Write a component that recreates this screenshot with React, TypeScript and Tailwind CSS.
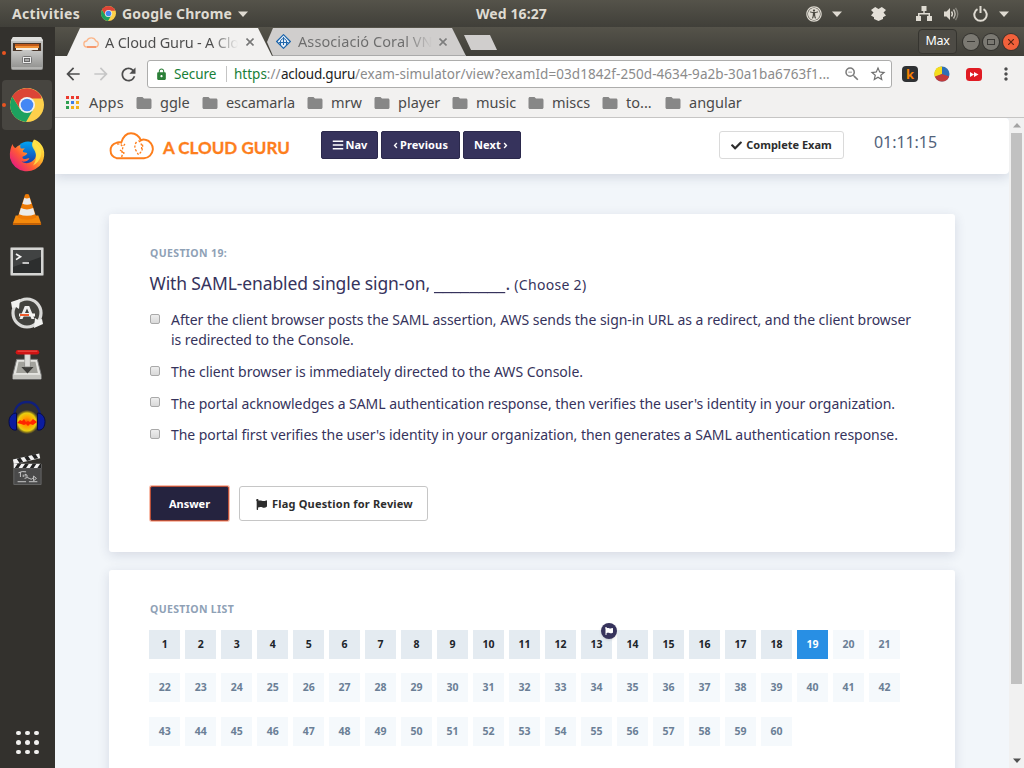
import type { ReactNode } from "react";
import { MdArrowBack, MdArrowForward, MdRefresh, MdLock, MdStarBorder, MdMoreVert, MdFolder, MdZoomOut } from "react-icons/md";
import { FaUniversalAccess, FaBars, FaCheck, FaFlag, FaAngleLeft, FaAngleRight } from "react-icons/fa";

const FONT = "font-['Noto_Sans','Open_Sans',sans-serif]";

function Caret() {
  return (
    <svg width="10" height="6" viewBox="0 0 10 6">
      <path d="M0 .5h10L5 6z" fill="#dfdbd2" />
    </svg>
  );
}

function ChromeLogo({ size }: { size: number }) {
  return (
    <svg width={size} height={size} viewBox="0 0 34 34">
      <circle cx="17" cy="17" r="17" fill="#fdd04b" />
      <path d="M17 17 2.3 8.5A17 17 0 0 1 31.7 9H17z" fill="#dd4b3e" />
      <path d="M2.3 8.5A17 17 0 0 0 16 34l7.5-13L17 17l-7 4z" fill="#1da15f" />
      <path d="M2.3 8.5A17 17 0 0 1 31.9 10.500H17a8 8 0 0 0-7.2 10z" fill="#dc4437" />
      <circle cx="17" cy="17" r="8" fill="#f1f1f1" />
      <circle cx="17" cy="17" r="6.3" fill="#4487f4" />
    </svg>
  );
}

function FilesIcon() {
  return (
    <svg width="34" height="34" viewBox="0 0 34 34">
      <defs>
        <linearGradient id="cab" x1="0" y1="0" x2="0" y2="1">
          <stop offset="0" stopColor="#c9c9c7" />
          <stop offset="1" stopColor="#929290" />
        </linearGradient>
      </defs>
      <path d="M3 1h28l2 3v28a2 2 0 0 1-2 2H3a2 2 0 0 1-2-2V4z" fill="url(#cab)" />
      <path d="M3 1h28l2 4H1z" fill="#dededc" />
      <path d="M3 7h28v8H3z" fill="#493528" />
      <path d="M5 8h24v2H5z" fill="#c15a19" />
      <path d="M5 10h24v2H5z" fill="#ef9137" />
      <path d="M6 12h22v2H6z" fill="#f6efe3" />
      <path d="M2 15h9l2-1h8l2 1h9v17H2z" fill="url(#cab)" />
      <path d="M2 31.500h30v1H2z" fill="#d0d0ce" />
      <rect x="12.5" y="20.500" width="9" height="7" rx="1" fill="#eee" stroke="#777" />
      <rect x="14.500" y="22.500" width="5" height="3" fill="#aaa" stroke="#666" />
    </svg>
  );
}

function FirefoxIcon() {
  return (
    <svg width="36" height="36" viewBox="0 0 36 36">
      <defs>
        <linearGradient id="ffo" x1="1" y1=".1" x2=".1" y2=".9">
          <stop offset="0" stopColor="#fff44f" />
          <stop offset=".35" stopColor="#ffb629" />
          <stop offset=".65" stopColor="#ff5a36" />
          <stop offset="1" stopColor="#e31587" />
        </linearGradient>
        <linearGradient id="ffb" x1="0" y1="0" x2="0" y2="1">
          <stop offset="0" stopColor="#00a3f4" />
          <stop offset="1" stopColor="#1a2f9e" />
        </linearGradient>
      </defs>
      <circle cx="19" cy="15" r="12.500" fill="url(#ffb)" />
      <path d="M3.500 5c.5 2 1.500 3.500 3 4 1.500-1.500 3-2.700 5-3-.5 1.500-.3 2.600.5 3.500 1.200-.2 2.600 0 4 .1-1.400 1-2.400 2-2.100 3.100.8 1 2.900.9 4.400 1.300-.2 2-2.800 2.600-4.800 3.700-.3 1.500.6 2 1.500 2.300 2 .5 3.500-1.500 5.500-.5-2 3-5 3.500-8 3 5 3.500 11 1 13.500-3 1.500-3 1.500-7-1-10.500-2-3-1.500-6 .5-8.500 4 1.400 7.500 5 9 9.500 1.300 4 .8 9-1 13A17.500 17.500 0 0 1 1 19C.5 13 1.500 9 3.500 5z" fill="url(#ffo)" />
      <path d="M25 .5c1 3.500 4 5 6 8 3 5 1 14-7 18 3-4 4-9 2-14-2-4-5-6-1-12z" fill="#ffe54a" opacity=".85" />
    </svg>
  );
}

function VlcIcon() {
  return (
    <svg width="32" height="36" viewBox="0 0 34 36">
      <path d="M5 25h24l3 8.500H2z" fill="#f58a0c" />
      <path d="M2 33h30v2H2z" fill="#c96305" />
      <path d="M15 2.500q2-1 4 0L27 27q-10 5-20 0z" fill="#ee7b06" />
      <path d="m14.200 6-2 6.500q5 2 9.600 0L19.800 6q-3 1.500-5.600 0zM10.500 17l-2 6.500q8.500 3.500 17 0l-2-6.500q-6.500 3-13 0z" fill="#ebebeb" />
    </svg>
  );
}

function TerminalIcon() {
  return (
    <svg className="mt-0.5" width="34" height="30" viewBox="0 0 34 30">
      <rect x=".5" y=".5" width="33" height="28" rx="1" fill="#d5d5d3" stroke="#8d8d8a" />
      <rect x="3" y="3" width="28" height="23" fill="#2c2e2e" />
      <path d="M3 3h28v7L3 20z" fill="#414343" />
      <path d="m6 7 4.500 2.800L6 12.600M12.500 16H19" fill="none" stroke="#f4f4f4" strokeWidth="1.700" />
    </svg>
  );
}

function UpdaterIcon() {
  return (
    <svg width="34" height="34" viewBox="0 0 34 34">
      <circle cx="17" cy="17" r="14" fill="#42423e" stroke="#d9d9d7" strokeWidth="3.200" />
      <path d="M1 6l9-3-1 10-3-2-4 1zM33 28l-9 4 1-10 3 2 4-1z" fill="#f1f1ef" />
      <path d="M14.800 10h4.400L24.500 23h-3l-1.500-3.500h-6L12.500 23h-3zM17 12.500l-2 4.500h4z" fill="#eee" />
      <path d="M9 17.500h16v3H9z" fill="#f4f4f2" />
      <path d="M10 18h9v2h-9z" fill="#ee5b2c" />
    </svg>
  );
}

function TransmissionIcon() {
  return (
    <svg width="32" height="34" viewBox="0 0 34 36">
      <path d="M6 12h22l4 16v5H2v-5z" fill="#e3e3df" stroke="#777" />
      <path d="M8 14.500h18l2.500 12h-23z" fill="#a2a29c" />
      <path d="M2 28.500h30V33H2z" fill="#c3c3be" />
      <path d="M11 20h3.500v-4h6v4H24l-6.500 7z" fill="#3e3e3b" />
      <path d="M14.500 6h6v14h-6z" fill="#dcdcd9" stroke="#8c8c88" strokeWidth=".6" />
      <rect x="5" y="2" width="25" height="4.800" rx="2.400" fill="#cf1414" />
      <path d="M7 3.300h21" stroke="#f05a50" />
    </svg>
  );
}

function AudacityIcon() {
  return (
    <svg width="38" height="36" viewBox="0 0 38 36">
      <defs>
        <radialGradient id="aud">
          <stop offset="0" stopColor="#ff5a00" />
          <stop offset=".4" stopColor="#ffa200" />
          <stop offset=".75" stopColor="#e8cf10" />
          <stop offset="1" stopColor="#a98b10" stopOpacity=".1" />
        </radialGradient>
      </defs>
      <path d="M6 18C6 8 12 3 19 3s13 5 13 15" fill="none" stroke="#101f7c" strokeWidth="2.400" />
      <ellipse cx="19" cy="23" rx="12" ry="12" fill="url(#aud)" />
      <path d="M9 24l3-3 2 1 2-2 2 3 2-1 2 1 3-3 4 3-4 3-3-1-2 2-2-2-2 1-3-1z" fill="#ff2600" />
      <path d="M8.500 14v17C3 32 1 27 1 22.500S4 14 8.500 14zM29.500 14v17c5.500 1 7.500-4 7.500-8.500S34 14 29.500 14z" fill="#0b1c9e" stroke="#060b45" />
    </svg>
  );
}

function ClapperIcon() {
  return (
    <svg width="32" height="36" viewBox="0 0 34 36">
      <path d="m2 8 28-6.500 1 5L3 13z" fill="#f2f2f2" />
      <path d="m6 7 4-1 3 4.500-4 1zM14 5l4-1 3 4.500-4 1zM22 3l4-1 3 4.500-4 1z" fill="#222" />
      <path d="M3 13h29v21.500H3z" fill="#4a4a4a" stroke="#666" />
      <path d="M3 12.500h29v4.500H3z" fill="#f2f2f2" />
      <path d="M4 17l3-4.500h4L8 17zM12 17l3-4.500h4L16 17zM20 17l3-4.500h4L24 17zM28 17l3-4.500h1V17z" fill="#222" />
      <path d="M8 22q4-2 8-1M10 21.500v5M13 24v2.500M15 26v-2.500l2 1v2M14.500 28q3-2 5 0t4-.5M24 25.500v5l3-2.500zM7 31.500h9M19 31.500h9" fill="none" stroke="#ddd" strokeWidth=".9" />
    </svg>
  );
}

const dockItems: { icon: ReactNode; active?: boolean; running?: boolean }[] = [
  { icon: <FilesIcon />, running: true },
  { icon: <ChromeLogo size={34} />, active: true, running: true },
  { icon: <FirefoxIcon /> },
  { icon: <VlcIcon /> },
  { icon: <TerminalIcon /> },
  { icon: <UpdaterIcon /> },
  { icon: <TransmissionIcon /> },
  { icon: <AudacityIcon /> },
  { icon: <ClapperIcon /> },
];

function TopBar() {
  return (
    <header className="flex h-[27px] shrink-0 items-center bg-gradient-to-b from-[#55534a] to-[#403f39] text-sm font-bold text-[#dfdbd2]">
      <div className="w-[89px] pl-3 tracking-[0.3px]">Activities</div>
      <div className="flex w-[387px] items-center pl-[12px]">
        <ChromeLogo size={15} />
        <span className="ml-1.5 mr-[6px] tracking-[0.2px]">Google Chrome</span>
        <Caret />
      </div>
      <div className="grow tracking-[0.1px]">Wed 16:27</div>
      <div className="flex items-center pr-[15px]">
        <FaUniversalAccess size={16} />
        <span className="ml-2.5 mr-[29px]"><Caret /></span>
        <svg width="15" height="14" viewBox="0 0 15 14" fill="#e4e0d8">
          <path d="M4.200 0 7.500 2 10.800 0 15 3l-2.500 2.600L15 8.500l-3 1.800V12L7.500 14 3 12v-1.700L0 8.500l2.500-2.900L0 3z" />
        </svg>
        <svg className="ml-[30px]" width="16" height="15" viewBox="0 0 16 15" fill="#dfdbd2">
          <path d="M5.500 0h5v5H8.700v2H14v3h2v5h-5v-5h1.500V8.500h-9V10H5v5H0v-5h2V7h5.300V5H5.500z" />
        </svg>
        <svg className="ml-[12px]" width="15" height="14" viewBox="0 0 15 14" fill="none" stroke="#dfdbd2">
          <path d="M0 4.500h2.500L6 1v12L2.500 9.500H0z" fill="#dfdbd2" stroke="none" />
          <path d="M7.500 4.500q1.800 2.500 0 5" strokeWidth="1.400" />
          <path d="M9.500 2.500q3.200 4.500 0 9" strokeWidth="1.400" opacity=".8" />
          <path d="M11.500.8q4.400 6 0 12.400" strokeWidth="1.400" opacity=".4" />
        </svg>
        <svg className="ml-3.5" width="15" height="16" viewBox="0 0 15 16" fill="none" stroke="#dfdbd2" strokeWidth="2">
          <path d="M4.500 3.200a6.200 6.200 0 1 0 6 0M7.500 0v7" />
        </svg>
        <span className="-mr-[0px] ml-[11px]"><Caret /></span>
      </div>
    </header>
  );
}

function Dock() {
  return (
    <nav className="flex w-[55px] shrink-0 flex-col bg-[#33312d]">
      {dockItems.map((d, i) => (
        <div key={i} className="relative flex h-[52px] w-full items-center justify-center pr-px">
          <div className={d.active ? "flex h-[50px] w-[50px] items-center justify-center rounded bg-[#474540]" : "flex h-[50px] w-[50px] items-center justify-center"}>
            {d.icon}
          </div>
          {d.running && <span className="absolute left-0.5 top-6 size-1 rounded-full bg-[#e95420]" />}
        </div>
      ))}
      <div className="mb-[14px] ml-[16px] mt-auto grid w-[23px] grid-cols-[4px_4px_4px] gap-[5px]">
        {Array.from({ length: 9 }, (_, i) => (
          <span key={i} className="size-[4.500px] rounded-full bg-[#f2f1ef]" />
        ))}
      </div>
    </nav>
  );
}

function CloseX({ color }: { color: string }) {
  return (
    <svg width="8" height="8" viewBox="0 0 8 8">
      <path d="m.5.5 7 7m0-7-7 7" stroke={color} strokeWidth="1.600" />
    </svg>
  );
}

function TabStrip() {
  return (
    <div className="flex h-[29px] shrink-0 bg-gradient-to-b from-[#55534a] to-[#403f39] pl-3">
      <div className="z-10 mt-px flex h-[28px] w-[205px] items-center bg-[#f2f1f0] pl-4 pr-[18px] [clip-path:polygon(0_100%,13px_0,191px_0,100%_100%)]">
        <svg width="17" height="11" viewBox="0 0 17 11" fill="none" stroke="#fbb78b" strokeWidth="1.300">
          <path d="M4 10a3 3 0 0 1-.3-6 5 5 0 0 1 9.200 0A3.100 3.100 0 0 1 13 10z" />
          <path d="M4 10h9" stroke="#f58a5c" />
        </svg>
        <div className="ml-[5px] w-[133px] overflow-hidden whitespace-nowrap bg-gradient-to-r from-[#4c4c4c] from-80% to-transparent bg-clip-text text-[14.5px] leading-[27px] tracking-[-0.2px] text-transparent">A Cloud Guru - A Clo</div>
        <span className="ml-[8px]"><CloseX color="#777" /></span>
      </div>
      <div className="-ml-[8px] mt-px flex h-[28px] w-[202px] items-center border-b border-[#aaa] bg-[#d0cecd] pl-[12px] [clip-path:polygon(3px_14px,9px_0,188px_0,100%_100%,9px_100%)]">
        <svg width="15" height="15" viewBox="0 0 15 15">
          <path d="m7.500.7 6.800 6.800-6.800 6.800L.7 7.500z" fill="#e6eff8" stroke="#1c65ab" strokeWidth="1.200" />
          <path d="M4.500 11V6.500L7.500 4l3 2.500V11M7.500 3v8M3 8.500h9" fill="none" stroke="#2369ad" />
        </svg>
        <div className="ml-[7px] w-[134px] overflow-hidden whitespace-nowrap bg-gradient-to-r from-[#6c6c6c] from-80% to-transparent bg-clip-text text-[14.5px] leading-[27px] tracking-[0.09px] text-transparent">Associació Coral VN</div>
        <span className="ml-[7px]"><CloseX color="#7d7d7d" /></span>
      </div>
      <div className="-ml-[2px] mt-2 h-[15px] w-[33px] bg-[#d0cecd] [clip-path:polygon(0_0,26px_0,100%_100%,7px_100%)]" />
      <div className="ml-auto mr-[5px] flex items-center gap-1">
        <div className="mr-[2px] flex h-[25px] w-[39px] items-center justify-center rounded border border-[#35342f] bg-[#4d4b45] text-[12.5px] tracking-[-0.3px] text-white">Max</div>
        <div className="flex size-4 items-center justify-center rounded-full bg-[#7b7972] shadow-[0_0_0_1px_#33322e]"><span className="h-px w-2 bg-[#3a3935]" /></div>
        <div className="flex size-4 items-center justify-center rounded-full bg-[#7b7972] shadow-[0_0_0_1px_#33322e]"><span className="h-1.5 w-2 border border-[#3a3935]" /></div>
        <div className="flex size-4 items-center justify-center rounded-full bg-[#f2613b] shadow-[0_0_0_1px_#3e332e]">
          <svg width="6" height="6" viewBox="0 0 6 6"><path d="m0 0 6 6m0-6L0 6" stroke="#5a2413" strokeWidth="1.200" /></svg>
        </div>
      </div>
    </div>
  );
}

function Toolbar() {
  return (
    <div className="flex h-[35px] shrink-0 items-center bg-[#f2f1f0] pl-2 pt-px text-[13.5px]">
      <MdArrowBack size={20} className="text-[#4d4d4d]" />
      <MdArrowForward size={20} className="ml-2 text-[#c6c6c6]" />
      <MdRefresh size={21} className="ml-[7px] text-[#4d4d4d]" />
      <div className="ml-[8px] flex h-7 w-[745px] items-center whitespace-nowrap rounded-[3px] border border-[#adadac] bg-white pl-[7px]">
        <MdLock size={13} className="text-[#2b7f38]" />
        <span className="ml-1.5 w-[43px] tracking-[-0.1px] text-[#188038]">Secure</span>
        <span className="ml-[9px] h-4 w-px bg-[#c5c5c5]" />
        <span className="ml-[7px] w-[47px] text-[#8b8b8b]"><span className="text-[#188038]">https</span>://</span>
        <span className="w-[74px] tracking-[-0.23px] text-[#222]">acloud.guru</span>
        <span className="w-[480px] tracking-[0.065px] text-[#8b8b8b]">/exam-simulator/view?examId=03d1842f-250d-4634-9a2b-30a1ba6763f1...</span>
        <MdZoomOut size={18} className="ml-[8px] text-[#7b7b7b]" />
        <MdStarBorder size={18} className="ml-2 text-[#6f6f6f]" />
      </div>
      <div className="ml-2.5 h-4 w-4 rounded-sm bg-[#2f3133] text-center text-[13px] font-bold leading-4 text-[#f78000]">k</div>
      <svg className="ml-4" width="16" height="16" viewBox="0 0 16 16">
        <circle cx="8" cy="8" r="7.500" fill="#2f6fb5" />
        <path d="M8 8V.5A7.500 7.500 0 0 0 1 11.300z" fill="#f6dd1c" />
        <path d="M8 8 .9 10.500a7.500 7.500 0 0 0 14.200 0z" fill="#c23b3b" />
      </svg>
      <svg className="ml-4" width="16" height="13" viewBox="0 0 16 13">
        <rect width="16" height="13" rx="3.500" fill="#e01b23" />
        <path d="M4 4v5l4-2.500zM8 4v5l4.500-2.500z" fill="#fff" />
      </svg>
      <MdMoreVert size={20} className="ml-[14px] text-[#4d4d4d]" />
    </div>
  );
}

const bookmarks = [
  { name: "ggle", cls: "w-[66px]" },
  { name: "escamarla", cls: "w-[105px] tracking-[-0.09px]" },
  { name: "mrw", cls: "w-[67px]" },
  { name: "player", cls: "w-[78px]" },
  { name: "music", cls: "w-[76px]" },
  { name: "miscs", cls: "w-[74px]" },
  { name: "to...", cls: "w-[63px]" },
  { name: "angular", cls: "w-[80px]" },
];

function Bookmarks() {
  const dots = ["bg-[#ec3a2e]", "bg-[#ec3a2e]", "bg-[#ec3a2e]", "bg-[#2f9e50]", "bg-[#3f7de8]", "bg-[#f3b01c]", "bg-[#2f9e50]", "bg-[#f3b01c]", "bg-[#f3b01c]"];
  return (
    <div className="flex h-[27px] shrink-0 items-center border-b border-[#c6c5c4] bg-[#f2f1f0] pb-[3px] pl-[11px] text-[14.5px] text-[#4a4a4a]">
      <div className="grid w-[13px] grid-cols-3 gap-0.5">
        {dots.map((d, i) => <span key={i} className={"size-[3px] " + d} />)}
      </div>
      <span className="ml-[10px] w-[46px] tracking-[0.2px]">Apps</span>
      {bookmarks.map((b) => (
        <div key={b.name} className={"flex shrink-0 items-center whitespace-nowrap " + b.cls}>
          <MdFolder size={18} className="mr-[7px] shrink-0 text-[#878787]" />
          {b.name}
        </div>
      ))}
    </div>
  );
}

function CloudLogo() {
  return (
    <svg className="-ml-px" width="47" height="28" viewBox="0 0 47 28" fill="none" stroke="#fd7e1c">
      <path d="M9.500 26.200a8 8 0 0 1-.2-15.400q2.400-1.200 5-.3C16 5 19.500 1.300 24 1.300s8 2.700 9.800 7.100c1.600-.9 3.200-1 4.600-.6A9.300 9.300 0 0 1 37 26.200z" strokeWidth="1.900" />
      <path d="M10 12q4.500-.5 6 3.500M18 12q-2 2-2.500 5t-.5 7M31.500 8.500q4 3 3 8.500M29.500 10q-3 4-.5 8.500t3 5M35.500 12.500q1 6-4 10M13 18l4 3-2.500 4" strokeWidth="1.300" strokeDasharray="2.200 1.600" />
    </svg>
  );
}

const navButton = "flex h-7 items-center justify-center rounded-[2px] border border-[#2b294c] bg-[#36335c] text-[11px] font-bold text-white";

function ExamHeader() {
  return (
    <div className="z-10 flex h-14 shrink-0 items-start rounded-r-sm bg-white pl-[53px] pt-[13px] shadow-[0_3px_12px_rgba(40,50,90,0.16)]">
      <div className="mt-px flex w-[213px] items-center">
        <CloudLogo />
        <span className="ml-[9px] pt-[3px] font-['Lato',sans-serif] text-[17px] font-bold leading-6 text-[#fd7e1c] [-webkit-text-stroke:0.3px_#fd7e1c]">A CLOUD GURU</span>
      </div>
      <button className={navButton + " w-[57px] gap-0.5"}><FaBars size={12} />Nav</button>
      <button className={navButton + " ml-[3px] w-[79px] tracking-[0.14px]"}><FaAngleLeft size={9} className="-ml-0.5" />Previous</button>
      <button className={navButton + " ml-[3px] w-[58px] tracking-[0.15px]"}>Next<FaAngleRight size={9} /></button>
      <button className="ml-[198px] flex h-7 w-[125px] items-center justify-center gap-1 rounded-[3px] border border-[#dadada] bg-white text-[11px] font-bold text-[#2d2d2d]"><FaCheck size={11} />Complete Exam</button>
      <span className="ml-[30px] text-[16px] leading-[23px] tracking-[-0.06px] text-[#52627a]">01:11:15</span>
    </div>
  );
}

const options = [
  { text: "After the client browser posts the SAML assertion, AWS sends the sign-in URL as a redirect, and the client browser is redirected to the Console.", cls: "mb-3 tracking-[-0.031px]", box: "mt-1" },
  { text: "The client browser is immediately directed to the AWS Console.", cls: "mb-3 tracking-[-0.01px]", box: "mt-1" },
  { text: "The portal acknowledges a SAML authentication response, then verifies the user's identity in your organization.", cls: "mb-[11px] tracking-[-0.049px]", box: "mt-[3px]" },
  { text: "The portal first verifies the user's identity in your organization, then generates a SAML authentication response.", cls: "tracking-[-0.044px]", box: "mt-1" },
];

const cardShadow = "rounded-[3px] bg-white shadow-[0_3px_12px_rgba(40,50,90,0.14)]";

function QuestionCard() {
  return (
    <section className={"h-[338px] shrink-0 px-[41px] pt-[29px] " + cardShadow}>
      <h2 className="text-[10.5px] font-bold leading-5 tracking-[0.38px] text-[#8fa1b6]">QUESTION 19:</h2>
      <div className="-ml-[0.5px] mt-[7px] flex h-[26px] items-baseline whitespace-nowrap text-[#36335c]">
        <span className="text-[17.5px] leading-[26px] tracking-[-0.12px]">With SAML-enabled single sign-on,</span>
        <span className="ml-1 text-[18px] tracking-[-0.3px] [transform-origin:left] scale-x-115">________</span>
        <span className="ml-[10px] text-[17.5px]">.</span>
        <span className="ml-1 text-sm tracking-[0.3px]">(Choose 2)</span>
      </div>
      <div className="mt-[14px] text-sm leading-5 text-[#36335c]">
        {options.map((o) => (
          <label key={o.text} className={"flex items-start " + o.cls}>
            <span className={"mr-[11px] h-[10px] w-[10px] shrink-0 rounded-[2px] border border-[#a9a9a9] bg-gradient-to-b from-[#eee] to-[#d9d9d9] " + o.box} />
            <span className="w-[752px]">{o.text}</span>
          </label>
        ))}
      </div>
      <div className="mt-[41px] flex gap-[10px] text-[11px] font-bold">
        <button className="h-[35px] w-[79px] rounded-[2px] border border-[#b9503a] bg-[#25233f] pt-px text-white shadow-[0_0_0_1px_rgba(240,110,70,0.45)]">Answer</button>
        <button className="flex h-[35px] w-[189px] items-center justify-center gap-[5px] rounded-[3px] border border-[#c6c6c6] bg-white pl-0.5 pt-px tracking-[0.19px] text-[#2d2d2d]"><FaFlag size={11} />Flag Question for Review</button>
      </div>
    </section>
  );
}

function QuestionList() {
  return (
    <section className={"mt-[18px] h-[260px] shrink-0 px-[41px] pt-[29px] " + cardShadow}>
      <h2 className="text-[10.5px] font-bold leading-5 tracking-[0.36px] text-[#8fa1b6]">QUESTION LIST</h2>
      <div className="-ml-[0.6px] mt-[11px] grid grid-cols-[repeat(21,30.600px)] gap-x-[5.4px] gap-y-[14.3px] text-center text-[10.5px] font-bold leading-[29px]">
        {Array.from({ length: 60 }, (_, i) => {
          const n = i + 1;
          const tone = n < 19 ? "bg-[#e4ebf1] text-[#20242a]" : n === 19 ? "bg-[#288fe4] text-white" : "bg-[#f5f9fc] text-[#6b7f96]";
          return (
            <div key={n} className={"relative h-[29px] " + tone}>
              {n}
              {n === 13 && (
                <span className="absolute -top-[7px] left-5 flex size-4 items-center justify-center rounded-full bg-[#36335c] text-white shadow-sm"><FaFlag size={8} /></span>
              )}
            </div>
          );
        })}
      </div>
    </section>
  );
}

function Scrollbar() {
  return (
    <div className="flex w-[15px] shrink-0 flex-col items-center bg-[#f1f1f1]">
      <svg className="my-[5px]" width="8" height="5" viewBox="0 0 8 5"><path d="M4 0 8 4.500H0z" fill="#a3a3a3" /></svg>
      <div className="h-[551px] w-[11px] bg-[#c1c1c1]" />
      <svg className="mb-[5px] mt-auto" width="8" height="5" viewBox="0 0 8 5"><path d="M0 .5h8L4 5z" fill="#505050" /></svg>
    </div>
  );
}

export default function App() {
  return (
    <div className={"flex h-[768px] w-[1024px] flex-col overflow-hidden " + FONT}>
      <TopBar />
      <div className="flex min-h-0 grow">
        <Dock />
        <div className="flex min-w-0 grow flex-col">
          <TabStrip />
          <Toolbar />
          <Bookmarks />
          <div className="flex min-h-0 grow">
            <main className="flex w-[954px] flex-col overflow-hidden bg-[#f2f6fa]">
              <ExamHeader />
              <div className="flex flex-col pl-[54px] pr-[54px] pt-10">
                <QuestionCard />
                <QuestionList />
              </div>
            </main>
            <Scrollbar />
          </div>
        </div>
      </div>
    </div>
  );
}
